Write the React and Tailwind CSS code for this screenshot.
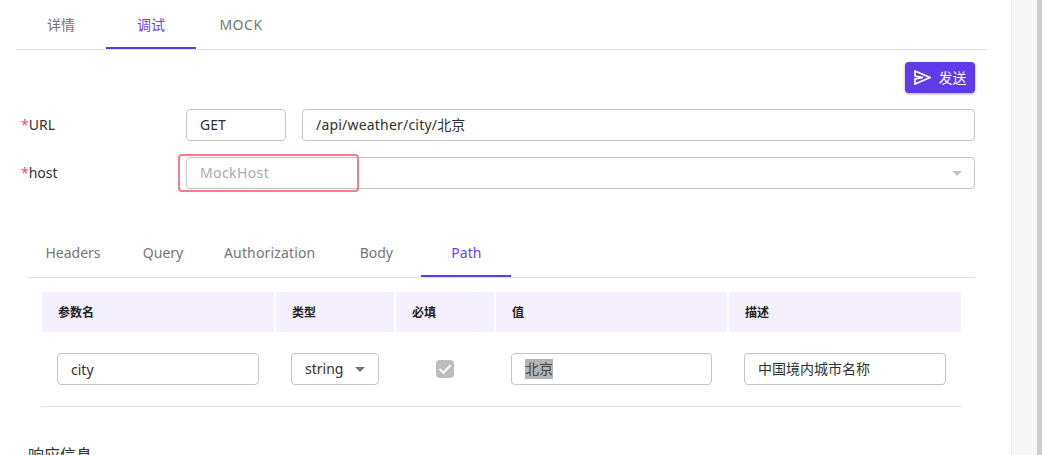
import React from 'react';

function Field({ className = '', children }) {
    return (
        <div className={`h-8 border border-[#c4c4c4] rounded flex items-center text-sm text-[#303133] ${className}`}>
            {children}
        </div>
    );
}

function Caret({ className = '' }) {
    return <span className={`w-0 h-0 border-x-[5px] border-x-transparent border-t-[5px] ${className}`} />;
}

function SendIcon() {
    return (
        <svg width="17" height="15" viewBox="0 0 17 15" className="shrink-0">
            <path d="M1 1 L16 7.5 L1 14 L1 9 L9 7.5 L1 6 Z" fill="none" stroke="#fff" strokeWidth="1.7" strokeLinejoin="miter" />
        </svg>
    );
}

function TabItem({ label, active, className = '' }) {
    return (
        <div className={`relative min-w-[90px] px-4 flex items-center justify-center text-sm ${active ? 'text-[#6a42ee]' : 'text-[#73767a]'} ${className}`}>
            {label}
            {active && <span className="absolute left-0 right-0 bottom-0 h-0.5 bg-[#613bea]" />}
        </div>
    );
}

export default function App() {
    const columnas = ['参数名', '类型', '必填', '值', '描述'];

    return (
        <div className="h-[455px] overflow-hidden flex bg-white font-['Noto_Sans','Noto_Sans_CJK_SC',sans-serif]">
            <div className="w-[1011px] shrink-0 pl-4">
                {/* tabs principales */}
                <div className="h-[50px] w-[971px] flex border-b border-[#e0e0e0]">
                    <TabItem label="详情" />
                    <TabItem label="调试" active />
                    <TabItem label="MOCK" className="tracking-[0.5px]" />
                </div>

                <div className="w-[959px]">
                    <div className="flex justify-end mt-3">
                        <button className="w-[70px] h-[31px] rounded bg-[#613bea] text-white text-sm flex items-center justify-center gap-2 shadow-[0_1px_3px_rgba(0,0,0,0.35)]">
                            <SendIcon />
                            发送
                        </button>
                    </div>

                    {/* URL */}
                    <div className="flex items-center mt-4">
                        <div className="w-[170px] pl-[5px] text-sm text-[#303133]"><span className="text-[#f0506e]">*</span>URL</div>
                        <Field className="w-[100px] px-[13px]">GET</Field>
                        <Field className="flex-1 ml-4 px-[13px] tracking-[0.2px]">/api/weather/city/北京</Field>
                    </div>

                    {/* host */}
                    <div className="flex items-center mt-4">
                        <div className="w-[170px] pl-[5px] text-sm text-[#303133]"><span className="text-[#f0506e]">*</span>host</div>
                        <div className="relative flex-1">
                            <Field className="px-[13px] justify-between text-[#a8abb2]">
                                <span className="tracking-[0.4px]">MockHost</span>
                                <Caret className="border-t-[#c4c4c4] mr-[-1px]" />
                            </Field>
                            <div className="absolute left-[-8px] top-[-3px] w-[181px] h-[38px] border-2 border-[#fb7a8a] rounded" />
                        </div>
                    </div>

                    {/* tabs de parametros */}
                    <div className="ml-3 mt-[44px] h-[45px] flex border-b border-[#e0e0e0]">
                        <TabItem label="Headers" className="pb-1" />
                        <TabItem label="Query" className="pb-1" />
                        <TabItem label="Authorization" className="pb-1 tracking-[0.15px]" />
                        <TabItem label="Body" className="pb-1" />
                        <TabItem label="Path" active className="pb-1" />
                    </div>

                    {/* tabla */}
                    <div className="ml-[25px] w-[921px] mt-3.5">
                        <div className="ml-px w-[919px] h-10 grid grid-cols-[232px_118px_98px_231px_232px] gap-x-0.5">
                            {columnas.map(col => (
                                <div key={col} className="bg-[#f4f0fd] pl-4 pt-px flex items-center text-xs font-bold text-[#222]">{col}</div>
                            ))}
                        </div>
                        <div className="h-[75px] border-b border-[#e0e0e0] flex items-start pt-[21px]">
                            <Field className="ml-4 w-[202px] px-[13px] pt-px">city</Field>
                            <Field className="ml-8 w-[88px] pl-[13px] pr-[13px] justify-between">
                                string
                                <Caret className="border-t-[#757575]" />
                            </Field>
                            <div className="ml-[57px] mt-[7px] w-[18px] h-[18px] rounded-sm bg-[#bdbdbd] flex items-center justify-center">
                                <svg width="16" height="16" viewBox="0 0 16 16"><path d="M2.5 8 L6.5 11.8 L13.5 4.2" fill="none" stroke="#fff" strokeWidth="2" /></svg>
                            </div>
                            <Field className="ml-[57px] w-[201px] px-[13px]">
                                <span className="bg-[#b4b4b4] text-[#444]">北京</span>
                            </Field>
                            <Field className="ml-8 w-[202px] px-[13px]">中国境内城市名称</Field>
                        </div>
                    </div>

                    <div className="ml-3 mt-9 text-base text-[#303133]">响应信息</div>
                </div>
            </div>

            {/* barra lateral */}
            <div className="flex-1 bg-[#f7f7f7] border-l border-[#ececec]" />
            <div className="w-[5px] bg-[#cdcdcd]" />
        </div>
    );
}
